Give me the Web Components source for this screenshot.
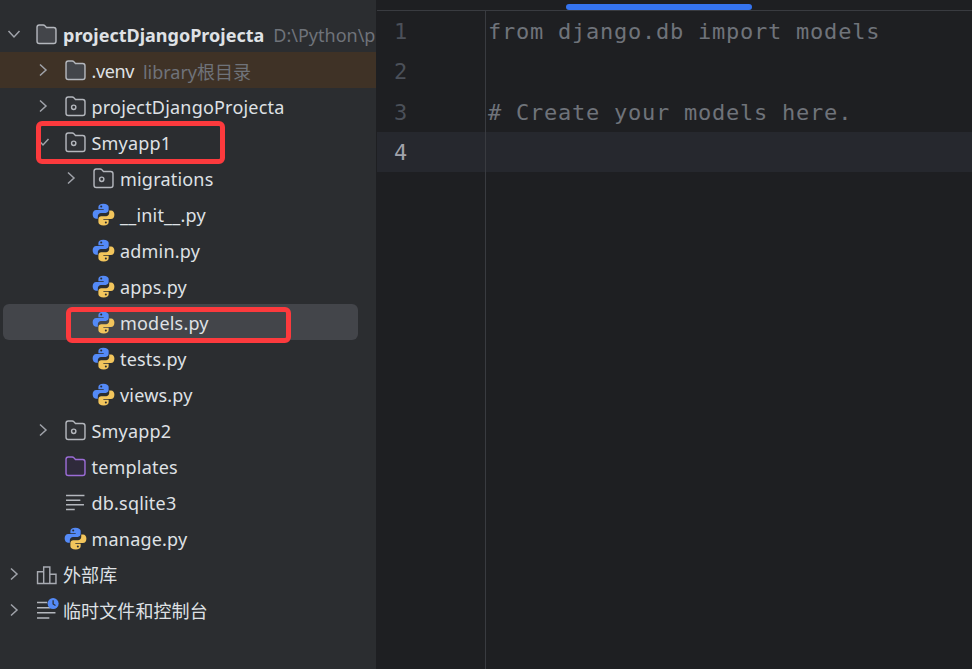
<!DOCTYPE html>
<html lang="zh">
<head>
<meta charset="utf-8">
<title>projectDjangoProjecta</title>
<style>
  html, body { margin: 0; height: 100%; background: #1e1f22; overflow: hidden; }
</style>
</head>
<body>
<ide-window>
  <project-tree slot="side">
    <tree-row level="0" chevron="down" icon="plain" bold>projectDjangoProjecta<span slot="hint">D:\Python\p</span></tree-row>
    <tree-row level="1" chevron="right" icon="plain" tint style="--track:-.4px">.venv<span slot="hint">library根目录</span></tree-row>
    <tree-row level="1" chevron="right" icon="module">projectDjangoProjecta</tree-row>
    <tree-row level="1" chevron="down" icon="module">Smyapp1</tree-row>
    <tree-row level="2" chevron="right" icon="module">migrations</tree-row>
    <tree-row level="2" icon="python">__init__.py</tree-row>
    <tree-row level="2" icon="python">admin.py</tree-row>
    <tree-row level="2" icon="python">apps.py</tree-row>
    <tree-row level="2" icon="python" selected>models.py</tree-row>
    <tree-row level="2" icon="python">tests.py</tree-row>
    <tree-row level="2" icon="python">views.py</tree-row>
    <tree-row level="1" chevron="right" icon="module">Smyapp2</tree-row>
    <tree-row level="1" icon="templates">templates</tree-row>
    <tree-row level="1" icon="text">db.sqlite3</tree-row>
    <tree-row level="1" icon="python">manage.py</tree-row>
    <tree-row level="0" chevron="right" icon="libs" style="--nudge:0px;--track:.1px">外部库</tree-row>
    <tree-row level="0" chevron="right" icon="scratch" style="--nudge:0px;--track:.1px">临时文件和控制台</tree-row>
    <red-box style="left:36px;top:121px;width:189px;height:43px"></red-box>
    <red-box style="left:66px;top:307px;width:225px;height:36px"></red-box>
  </project-tree>
  <code-editor slot="main">
    <code-line num="1">from django.db import models</code-line>
    <code-line num="2"></code-line>
    <code-line num="3"># Create your models here.</code-line>
    <code-line num="4" current></code-line>
  </code-editor>
</ide-window>

<script>
const FOLDER = 'M3.200 1H7.100C7.700 1 8.200 1.200 8.600 1.600L10.200 3.400H17.300C18.500 3.400 19.500 4.400 19.500 5.600V16.800C19.500 18 18.500 19 17.300 19H3.200C2 19 1 18 1 16.800V3.200C1 2 2 1 3.200 1Z';
const SNAKE = 'M10.100 .6C7 .6 5.700 1.800 5.700 3.500V5.600H10.400V6.300H3.700C1.900 6.300 .6 7.700 .6 10.100 .6 12.500 1.800 13.900 3.500 13.900H5.200V11.600C5.200 10 6.500 8.800 8 8.800H12.300C13.700 8.800 14.800 7.700 14.800 6.300V3.400C14.800 1.800 13 .6 10.100 .6Z';

const ICONS = {
  plain: `<path d="${FOLDER}" fill="#43454a" stroke="#b4b7bd" stroke-width="1.4"/>`,
  module: `<path d="${FOLDER}" fill="#2f3135" stroke="#b4b7bd" stroke-width="1.4"/>
    <circle cx="8.500" cy="11" r="2.100" fill="none" stroke="#b4b7bd" stroke-width="1.400"/>`,
  templates: `<path d="${FOLDER}" fill="#2f2a3b" stroke="#9b6cd6" stroke-width="1.4"/>`,
  python: `<g transform="translate(-1 -1) scale(1.1)"><path d="${SNAKE}" fill="#548af7"/><circle cx="8.200" cy="3.200" r=".9" fill="#2b2d30"/>
    <g transform="rotate(180 10.250 10.250)"><path d="${SNAKE}" fill="#f2c55c"/><circle cx="8.200" cy="3.200" r=".9" fill="#2b2d30"/></g></g>`,
  text: `<g stroke="#b4b7bd" stroke-width="1.400"><path d="M1 3.500H19M1 8H15M1 12.500H18.500M1 17H9.500"/></g>`,
  libs: `<g fill="none" stroke="#a8abb2" stroke-width="1.400"><path d="M1.500 7.500H7.500V19H1.500zM7.500 3H13.500V19H7.500zM13.500 10H19.500V19H13.500z"/></g>`,
  scratch: `<g stroke="#b4b7bd" stroke-width="1.400"><path d="M1 2.500H11M1 7.500H14M1 12.500H19M1 17.500H13"/></g>
    <circle cx="16.700" cy="3.500" r="5.400" fill="#548af7"/><path d="M16.700 .3V3.900L19 5.300" fill="none" stroke="#2b2d30" stroke-width="1.200"/>`
};

const CHEVRONS = {
  right: '<path d="M5 2.500L11 8L5 13.500" fill="none" stroke="#a0a3aa" stroke-width="1.500"/>',
  down: '<path d="M2.500 5L8 11L13.500 5" fill="none" stroke="#a0a3aa" stroke-width="1.500"/>'
};

class IdeWindow extends HTMLElement {
  constructor() {
    super();
    this.attachShadow({ mode: 'open' }).innerHTML = `
      <style>
        :host { display: flex; height: 669px; background: #1e1f22; }
        .side { display: block; flex: 0 0 376px; min-width: 0; overflow: hidden; }
        .main { display: block; flex: 1; min-width: 0; padding-left: 1px; }
      </style>
      <div class="side"><slot name="side"></slot></div>
      <div class="main"><slot name="main"></slot></div>`;
  }
}

class ProjectTree extends HTMLElement {
  constructor() {
    super();
    this.attachShadow({ mode: 'open' }).innerHTML = `
      <style>
        :host {
          display: block; position: relative; height: 669px; box-sizing: border-box;
          padding-top: 16px; background: #2b2d30; color: #dfe1e5; overflow: hidden;
          font: 18px "Noto Sans", "Noto Sans CJK SC", sans-serif;
        }
      </style>
      <slot></slot>`;
  }
}

class TreeRow extends HTMLElement {
  constructor() {
    super();
    const level = Number(this.getAttribute('level') || 0);
    const chevron = CHEVRONS[this.getAttribute('chevron')] || '';
    const icon = ICONS[this.getAttribute('icon')] || '';
    this.attachShadow({ mode: 'open' }).innerHTML = `
      <style>
        :host { display: block; height: 36px; }
        .row {
          display: flex; align-items: center; height: 36px; white-space: nowrap;
          padding-left: calc(6px + ${level} * 28.5px); overflow: hidden;
        }
        :host([tint]) .row { background: #3f3226; }
        :host([selected]) .row {
          margin: 0 18px 0 3px; padding-left: calc(3px + ${level} * 28.5px);
          background: #43454a; border-radius: 6px;
        }
        .label { margin-top: var(--nudge, 2px); letter-spacing: var(--track, .2px); }
        :host([bold]) .label { font-weight: 700; letter-spacing: 0; }
        .chev { flex: 0 0 16px; height: 16px; margin-right: 14px; }
        .icon { flex: 0 0 21px; height: 21px; margin-right: 6px; overflow: visible; }
        .hint { color: #6f737a; margin: 2px 0 0 9px; }
        svg { display: block; }
      </style>
      <div class="row">
        <svg class="chev" viewBox="0 0 16 16" width="16" height="16">${chevron}</svg>
        <svg class="icon" viewBox="0 0 20.500 20.500" width="21" height="21">${icon}</svg>
        <span class="label"><slot></slot></span>
        <span class="hint"><slot name="hint"></slot></span>
      </div>`;
  }
}

class RedBox extends HTMLElement {
  constructor() {
    super();
    this.attachShadow({ mode: 'open' }).innerHTML = `
      <style>
        :host {
          display: block; position: absolute; box-sizing: border-box;
          border: 5px solid #fc3a3d; border-radius: 6px; pointer-events: none;
        }
      </style>`;
  }
}

class CodeEditor extends HTMLElement {
  constructor() {
    super();
    this.attachShadow({ mode: 'open' }).innerHTML = `
      <style>
        :host { display: flex; flex-direction: column; height: 669px; background: #1e1f22; }
        .strip { flex: 0 0 10px; padding-left: 189px; border-bottom: 1px solid #393b40; box-sizing: content-box; }
        .thumb { width: 186px; height: 6px; margin-top: 4px; background: #3574f0; border-radius: 3px; }
        .filler { flex: 1; margin-left: 108px; border-left: 1px solid #393b40; }
      </style>
      <div class="strip"><div class="thumb"></div></div>
      <slot></slot>
      <div class="filler"></div>`;
  }
}

class CodeLine extends HTMLElement {
  constructor() {
    super();
    this.attachShadow({ mode: 'open' }).innerHTML = `
      <style>
        :host {
          display: flex; height: 40.330px; white-space: pre;
          font: 22px/41px "DejaVu Sans Mono", monospace;
        }
        :host([current]) { background: #26282e; }
        .num { flex: 0 0 108px; box-sizing: border-box; padding-left: 17px; color: #4b5059; }
        :host([current]) .num { color: #a1a3ab; }
        .text { flex: 1; padding-left: 2px; border-left: 1px solid #393b40; color: #6f737a; letter-spacing: .760px; }
      </style>
      <div class="num">${this.getAttribute('num')}</div>
      <div class="text"><slot></slot></div>`;
  }
}

customElements.define('ide-window', IdeWindow);
customElements.define('project-tree', ProjectTree);
customElements.define('tree-row', TreeRow);
customElements.define('red-box', RedBox);
customElements.define('code-editor', CodeEditor);
customElements.define('code-line', CodeLine);
</script>
</body>
</html>
